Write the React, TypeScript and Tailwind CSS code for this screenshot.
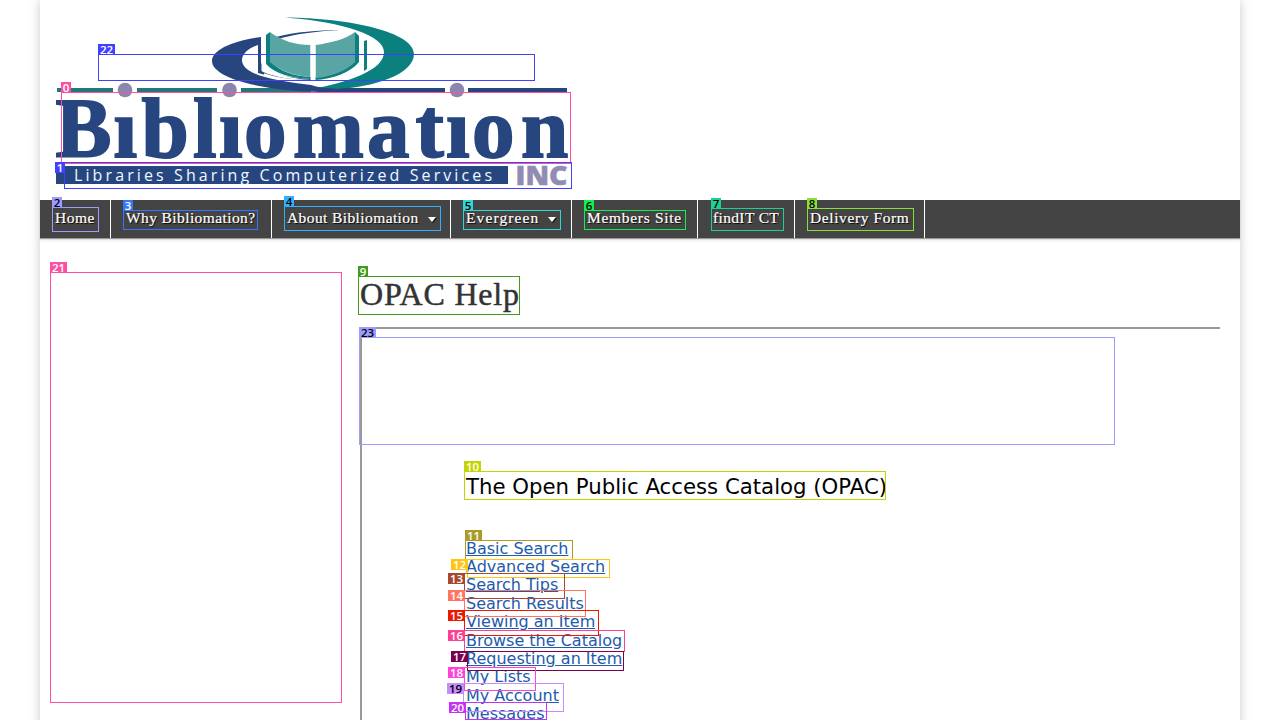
import React from "react";

const navItems = [
  { label: "Home", width: "w-[71px]", spacing: "tracking-[0.5px]" },
  { label: "Why Bibliomation?", width: "w-[161px]", spacing: "tracking-[0.4px]" },
  { label: "About Bibliomation", width: "w-[179px]", spacing: "tracking-[0.4px]", menu: true },
  { label: "Evergreen", width: "w-[121px]", spacing: "tracking-[1.1px]", menu: true },
  { label: "Members Site", width: "w-[126px]", spacing: "tracking-[0.7px]" },
  { label: "findIT CT", width: "w-[97px]", spacing: "tracking-[0.35px]" },
  { label: "Delivery Form", width: "w-[130px]", spacing: "tracking-[0.6px]" },
];

const links = [
  "Basic Search",
  "Advanced Search",
  "Search Tips",
  "Search Results",
  "Viewing an Item",
  "Browse the Catalog",
  "Requesting an Item",
  "My Lists",
  "My Account",
  "Messages",
];

type Mark = {
  id: number;
  box: [number, number, number, number];
  tag: [number, number];
  color: string;
  ink?: string;
};

const marks: Mark[] = [
  { id: 22, box: [98, 54, 535, 81], tag: [98, 44], color: "#4040ff" },
  { id: 0, box: [61, 92, 571, 164], tag: [61, 82], color: "#ff4fa3" },
  { id: 1, box: [64, 162, 572, 189], tag: [55, 162], color: "#4040ff" },
  { id: 2, box: [52, 207, 99, 232], tag: [52, 197], color: "#9c9cff", ink: "#000" },
  { id: 3, box: [123, 210, 258, 230], tag: [123, 200], color: "#3377ff" },
  { id: 4, box: [284, 206, 441, 231], tag: [284, 196], color: "#30b0ff", ink: "#000" },
  { id: 5, box: [463, 210, 561, 230], tag: [463, 200], color: "#33d6d6", ink: "#000" },
  { id: 6, box: [584, 210, 686, 230], tag: [584, 200], color: "#10f050", ink: "#000" },
  { id: 7, box: [711, 208, 784, 231], tag: [711, 198], color: "#1cd096", ink: "#000" },
  { id: 8, box: [807, 208, 914, 231], tag: [807, 198], color: "#86e038", ink: "#000" },
  { id: 9, box: [358, 276, 520, 315], tag: [358, 266], color: "#43991b" },
  { id: 10, box: [464, 471, 886, 500], tag: [464, 461], color: "#c3d500" },
  { id: 11, box: [465, 540, 573, 560], tag: [465, 530], color: "#aa9c2b" },
  { id: 12, box: [467, 559, 610, 578], tag: [451, 559], color: "#ffc414" },
  { id: 13, box: [464, 573, 565, 599], tag: [448, 573], color: "#a4492f" },
  { id: 14, box: [464, 590, 586, 617], tag: [448, 590], color: "#ff7560" },
  { id: 15, box: [464, 610, 599, 636], tag: [448, 610], color: "#ee1800" },
  { id: 16, box: [464, 630, 625, 652], tag: [448, 630], color: "#ff3f92" },
  { id: 17, box: [467, 651, 624, 671], tag: [451, 651], color: "#7d004f" },
  { id: 18, box: [464, 667, 536, 691], tag: [448, 667], color: "#ff42d8" },
  { id: 19, box: [463, 683, 564, 712], tag: [447, 683], color: "#c78cff", ink: "#000" },
  { id: 20, box: [465, 702, 547, 720], tag: [449, 702], color: "#c532f5" },
  { id: 21, box: [50, 272, 342, 703], tag: [50, 262], color: "#ff4fa3" },
  { id: 23, box: [359, 337, 1115, 445], tag: [359, 327], color: "#9c9cff", ink: "#000" },
];

function Logo() {
  return (
    <svg className="block" width="560" height="200" viewBox="40 0 560 200">
      <path fill="#25757a" d="M57 88h56v4H57zM137 88h80v4h-80zM241 88h70v4h-70z" />
      <path fill="#0b807f" d="M285 17.500 C350 18 414 32 414 54 C414 72 382 85 345 88.500 L308 90 C350 82 384 70 384 52 C384 36 345 22 285 17.500Z" />
      <path fill="#27467f" d="M261 37 C232 41 212 50 212 61 C212 78 262 92 330 92 L445 92 L445 88 L345 88 C330 89 320 88 311 85 C280 81 242 76 242 60 C242 54 248 48 258 45 L258 73 C275 78 295 80 311 80 L311 79 C290 78 270 74 261 63Z M276 37 C295 32 318 30 340 30 C315 31.500 295 34 278 39Z M468 88h99v4h-99z" />
      <path fill="#0b807f" d="M266 35 L270 32 L270 61 C280 72 295 76 311 77 L311 79 C292 78 275 74 266 64Z M355 32 L359 36 L359 62 C350 73 333 79 315 80 L315 77 C333 75 347 70 355 61Z M364 41 L367 40 L367 69 L364 71Z" />
      <path fill="#fff" d="M261.500 34 L265 33 L265 64 C276 76 297 79 311 80 C290 80 270 76 261.500 71Z M360 36 L363 38 L363 63 C351 76 333 81 315 82 L315 81 C334 79 350 73 360 62Z" />
      <path fill="none" stroke="#fff" strokeWidth="1.500" d="M264 74 C288 83 333 84 357 75" />
      <path fill="#59a5a3" d="M270 32 C282 41 296 45 310.500 45 L310.500 77 C295 76 280 71 270 62Z M315.500 45 C331 43 346 39 355 32 L355 62 C346 71 331 77 315.500 78Z" />
      <path fill="#fff" d="M310.500 44h5v36h-5z" />
      <g fill="#8b86ae">
        <circle cx="125" cy="90" r="7.300" />
        <circle cx="229.500" cy="90" r="7.300" />
        <circle cx="457" cy="90" r="7.300" />
      </g>
      <text x="55.500 113.500 141.500 193 219 244 293 367 415.500 446 472 521" y="157" fontFamily="Liberation Serif" fontWeight="700" fontSize="85" fill="#27467f" stroke="#27467f" strokeWidth="1.800"><tspan fontSize="84">B</tspan>ıblıomatıon</text>
      <path fill="#27467f" d="M56 166h452v18H56z" />
      <text x="74" y="180.500" fontFamily="Open Sans, sans-serif" fontSize="16" fill="#eefaff" textLength="418">Libraries Sharing Computerized Services</text>
      <text x="515.500" y="184.500" fontFamily="Open Sans, sans-serif" fontWeight="800" fontSize="26" fill="#918cb2" stroke="#918cb2" strokeWidth=".5" textLength="52" lengthAdjust="spacingAndGlyphs">INC</text>
    </svg>
  );
}

export default function App() {
  return (
    <div className="relative h-[720px] w-[1280px] overflow-hidden bg-white font-['DejaVu_Sans',sans-serif]">
      <div className="mx-auto h-[740px] w-[1200px] bg-white shadow-[0_0_10px_rgba(0,0,0,0.22)]">
        <header className="h-[200px]"><Logo /></header>
        <nav className="flex h-[38px] bg-[#444] shadow-[0_1px_1px_#999,0_3px_3px_#eee]">
          {navItems.map((item) => (
            <a key={item.label} className={`${item.width} flex h-full shrink-0 items-center whitespace-nowrap border-r border-white pl-[15px] font-['Liberation_Serif',serif] text-[15.500px] text-white [-webkit-text-stroke:0.2px_white] [text-shadow:1px_1px_1px_#000]`}>
              <span className={`relative -top-px ${item.spacing}`}>{item.label}</span>
              {item.menu && <svg className="ml-[9px] drop-shadow-[1px_1px_0_#111]" width="8" height="5" viewBox="0 0 8 5"><path d="M0 0h8L4 5z" fill="white" /></svg>}
            </a>
          ))}
        </nav>
        <div className="flex pt-[37px]">
          <aside className="w-[320px] shrink-0" />
          <main className="w-[860px]">
            <h1 className="h-[52px] whitespace-nowrap font-['Liberation_Serif',serif] text-[32px] leading-[38px] tracking-[0.8px] text-[#333] [-webkit-text-stroke:0.5px_#333]">OPAC Help</h1>
            <section className="h-[450px] border-l-2 border-t-2 border-[#999] pl-[104px] pt-[144px]">
              <h2 className="whitespace-nowrap text-[21.250px] leading-[28px] text-black">The Open Public Access Catalog (OPAC)</h2>
              <div className="mt-[38.500px] flex flex-col items-start">
                {links.map((link) => (
                  <a key={link} className="whitespace-nowrap text-[16px] leading-[18.400px] text-[#225aac] underline">{link}</a>
                ))}
              </div>
            </section>
          </main>
        </div>
      </div>
      {marks.map(({ id, box, tag, color, ink }) => (
        <React.Fragment key={id}>
          <div className="absolute border" style={{ left: box[0], top: box[1], width: box[2] - box[0], height: box[3] - box[1], borderColor: color }} />
          <span className="absolute flex h-[11px] items-center justify-center font-['Open_Sans',sans-serif] text-[11.500px] font-semibold leading-none" style={{ left: tag[0], top: tag[1], width: id > 9 ? 17 : 10, backgroundColor: color, color: ink ?? "#fff" }}>{id}</span>
        </React.Fragment>
      ))}
    </div>
  );
}
